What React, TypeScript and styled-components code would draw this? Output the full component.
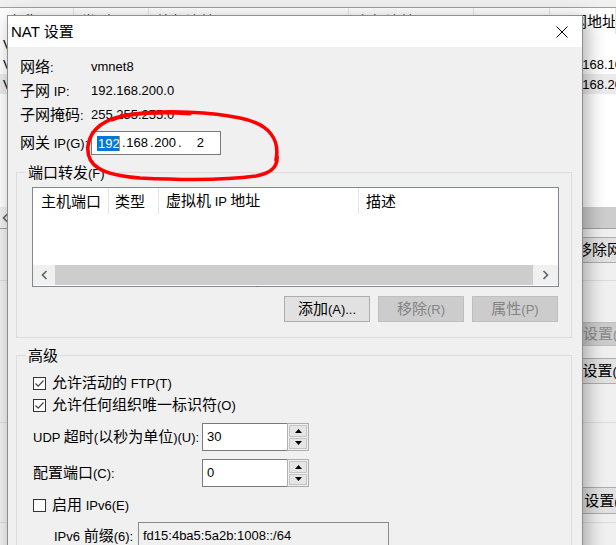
import React from 'react';
import styled, { createGlobalStyle } from 'styled-components';

const CJK_FONT = `"Noto Sans CJK SC", "Liberation Sans", sans-serif`;
const LATIN_FONT = `"Liberation Sans", "Noto Sans CJK SC", sans-serif`;

const GlobalStyle = createGlobalStyle`
  html, body { margin: 0; padding: 0; background: #f0f0f0; }
  body { font-family: ${CJK_FONT}; }
  * { box-sizing: border-box; }
`;

const Latin = styled.span<{ $size?: number }>`
  font-family: ${LATIN_FONT};
  font-size: ${(p) => p.$size ?? 13}px;
  white-space: pre;
`;

const CJK_RE = /([\u3000-\u303f\u4e00-\u9fff]+)/;

const Txt: React.FC<{ t: string; latin?: number }> = ({ t, latin }) => (
  <span>
    {t.split(CJK_RE).map((s, i) =>
      s === '' ? null : CJK_RE.test(s) ? (
        <React.Fragment key={i}>{s}</React.Fragment>
      ) : (
        <Latin key={i} $size={latin}>
          {s}
        </Latin>
      )
    )}
  </span>
);

/* ---------- page ---------- */

const Screen = styled.div`
  position: relative;
  width: 616px;
  height: 545px;
  overflow: hidden;
  background: #f0f0f0;
  font-family: ${CJK_FONT};
  font-size: 15px;
  line-height: 20px;
  color: #000;
`;

/* ---------- background window (virtual network editor) ---------- */

const BgWindow = styled.div`
  display: flex;
  flex-direction: column;
  height: 100%;
`;

const BgTopStrip = styled.div`
  flex: none;
  height: 7px;
`;

const BgList = styled.div`
  flex: none;
  height: 222px;
  border-top: 1px solid #a0a0a0;
  border-bottom: 1px solid #a0a0a0;
  background: #fff;
  display: flex;
  flex-direction: column;
`;

const bgCols = '74px 75px 200px 125px 76px 1fr';

const BgHeader = styled.div`
  display: grid;
  grid-template-columns: ${bgCols};
  height: 26px;
  flex: none;
`;

const BgHeadCell = styled.div<{ $pad?: number }>`
  border-right: 1px solid #e5e5e5;
  padding-left: ${(p) => p.$pad ?? 7}px;
  display: flex;
  align-items: center;
  white-space: nowrap;
  overflow: hidden;
`;

const BgRow = styled.div<{ $selected?: boolean }>`
  display: grid;
  grid-template-columns: ${bgCols};
  height: 20px;
  flex: none;
  background: ${(p) => (p.$selected ? '#ebebeb' : 'transparent')};
`;

const BgCell = styled.div<{ $pad?: number }>`
  padding-left: ${(p) => p.$pad ?? 7}px;
  display: flex;
  align-items: center;
  white-space: nowrap;
  overflow: hidden;
`;

const BgListFill = styled.div`
  flex: 1;
`;

const BgHScroll = styled.div`
  flex: none;
  height: 21px;
  display: flex;
  background: #f0f0f0;
`;

const BgScrollArrow = styled.div`
  width: 17px;
  display: flex;
  align-items: center;
  padding-left: 2px;
`;

const BgScrollThumb = styled.div`
  flex: 1;
  background: #cdcdcd;
`;

const BgButtonRow = styled.div`
  margin-top: 8px;
  display: flex;
`;

const BgButton = styled.div<{ $x: number; $h: number; $disabled?: boolean; $top: number }>`
  flex: none;
  margin-top: ${(p) => p.$top}px;
  margin-left: ${(p) => p.$x}px;
  width: 160px;
  height: ${(p) => p.$h}px;
  border: 1px solid ${(p) => (p.$disabled ? '#bfbfbf' : '#adadad')};
  background: ${(p) => (p.$disabled ? '#cccccc' : '#e1e1e1')};
  color: ${(p) => (p.$disabled ? '#8a8a8a' : '#000')};
  display: flex;
  align-items: center;
  padding-left: 10px;
  white-space: nowrap;
`;

const BgRule = styled.div<{ $top: number }>`
  flex: none;
  margin-top: ${(p) => p.$top}px;
  border-top: 1px solid #dcdcdc;
`;

/* ---------- dialog ---------- */

const Dialog = styled.div`
  position: absolute;
  left: 7px;
  top: 15px;
  width: 576px;
  height: 570px;
  border: 1px solid #8e8e8e;
  background: #f0f0f0;
  box-shadow: 4px 4px 18px rgba(0, 0, 0, 0.32);
  display: flex;
  flex-direction: column;
`;

const TitleBar = styled.div`
  flex: none;
  height: 31px;
  background: #fff;
  display: flex;
  align-items: center;
  justify-content: space-between;
  padding-left: 3px;
  font-family: ${LATIN_FONT};
  font-size: 15px;
`;

const CloseButton = styled.div`
  width: 41px;
  height: 31px;
  display: flex;
  align-items: center;
  justify-content: center;
`;

const Body = styled.div`
  flex: 1;
  padding: 8px 10px 0 8px;
  display: flex;
  flex-direction: column;
`;

const InfoGrid = styled.div`
  margin-left: 4px;
  display: grid;
  grid-template-columns: 71px 1fr;
  grid-template-rows: 24px 24px 24px 32px;
  align-items: center;
`;

const InfoLabel = styled.div`
  white-space: nowrap;
`;

const InfoValue = styled.div`
  font-family: ${LATIN_FONT};
  font-size: 13px;
`;

const IpBox = styled.div`
  width: 130px;
  height: 24px;
  border: 1px solid #7a7a7a;
  background: #fff;
  display: flex;
  align-items: center;
  padding-left: 5px;
  font-family: ${LATIN_FONT};
  font-size: 13px;
`;

const IpField = styled.div`
  width: 23px;
  display: flex;
  justify-content: flex-end;
  align-items: center;
`;

const IpDot = styled.div`
  width: 5px;
  padding-left: 2px;
`;

const Selected = styled.span`
  background: #0078d7;
  color: #fff;
  line-height: 15px;
  display: inline-block;
  padding-left: 1px;
`;

const Caret = styled.span`
  display: inline-block;
  width: 2px;
  height: 15px;
  background: #f08a24;
  margin-left: -1px;
`;

const Group = styled.div<{ $top: number }>`
  position: relative;
  margin-top: ${(p) => p.$top}px;
  border: 1px solid #dcdcdc;
`;

const GroupCaption = styled.span`
  position: absolute;
  top: -11px;
  left: 9px;
  padding: 0 2px;
  background: #f0f0f0;
  line-height: 20px;
  white-space: nowrap;
`;

const PortGroupInner = styled.div`
  padding: 14px 12px 15px 15px;
  display: flex;
  flex-direction: column;
`;

const ListView = styled.div`
  height: 100px;
  border: 1px solid #828790;
  background: #fff;
  display: flex;
  flex-direction: column;
`;

const LvHeader = styled.div`
  flex: none;
  height: 26px;
  display: grid;
  grid-template-columns: 76px 50px 200px 1fr;
`;

const LvHeadCell = styled.div<{ $pad: number; $last?: boolean }>`
  padding-left: ${(p) => p.$pad}px;
  border-right: ${(p) => (p.$last ? 'none' : '1px solid #e5e5e5')};
  display: flex;
  align-items: center;
  white-space: nowrap;
`;

const LvBody = styled.div`
  flex: 1;
`;

const LvScroll = styled.div`
  flex: none;
  height: 20px;
  margin-bottom: 1px;
  display: flex;
  background: #f0f0f0;
`;

const LvArrow = styled.div<{ $w: number }>`
  width: ${(p) => p.$w}px;
  display: flex;
  align-items: center;
  justify-content: center;
`;

const LvThumb = styled.div`
  flex: 1;
  background: #cdcdcd;
`;

const SplitterMark = styled.div`
  height: 0;
  display: flex;
  justify-content: center;
  padding-right: 76px;
  color: #555;
  font-size: 9px;
  line-height: 6px;
  font-family: ${LATIN_FONT};
`;

const ButtonRow = styled.div`
  margin-top: 9px;
  padding-right: 1px;
  display: flex;
  justify-content: flex-end;
  gap: 8px;
`;

const PushButton = styled.div<{ $disabled?: boolean }>`
  width: 86px;
  height: 26px;
  border: 1px solid ${(p) => (p.$disabled ? '#bfbfbf' : '#adadad')};
  background: ${(p) => (p.$disabled ? '#cccccc' : '#e1e1e1')};
  color: ${(p) => (p.$disabled ? '#838383' : '#000')};
  display: flex;
  align-items: center;
  justify-content: center;
  white-space: nowrap;
`;

const AdvInner = styled.div`
  padding: 16px 12px 40px 16px;
  display: flex;
  flex-direction: column;
`;

const CheckRow = styled.div<{ $top?: number }>`
  margin-top: ${(p) => p.$top ?? 0}px;
  height: 22px;
  display: flex;
  align-items: center;
  gap: 6px;
  white-space: nowrap;
`;

const CheckBox = styled.div`
  width: 13px;
  height: 13px;
  border: 1px solid #333;
  background: #fff;
  display: flex;
  align-items: center;
  justify-content: center;
`;

const FieldRow = styled.div<{ $top: number; $h: number }>`
  margin-top: ${(p) => p.$top}px;
  height: ${(p) => p.$h}px;
  display: flex;
  align-items: center;
`;

const FieldLabel = styled.div<{ $w: number; $indent?: number }>`
  width: ${(p) => p.$w}px;
  padding-left: ${(p) => p.$indent ?? 0}px;
  white-space: nowrap;
  flex: none;
`;

const SpinBox = styled.div`
  display: flex;
  height: 28px;
`;

const SpinInput = styled.div`
  width: 85px;
  height: 28px;
  border: 1px solid #7a7a7a;
  border-right: none;
  background: #fff;
  padding: 3px 0 0 4px;
  font-family: ${LATIN_FONT};
  font-size: 13px;
  line-height: 20px;
`;

const SpinButtons = styled.div`
  width: 22px;
  border: 1px solid #adadad;
  display: flex;
  flex-direction: column;
  background: #f0f0f0;
`;

const SpinBtn = styled.div<{ $first?: boolean }>`
  flex: 1;
  margin: 1px;
  margin-top: ${(p) => (p.$first ? 1 : 0)}px;
  background: #e5e5e5;
  border: 1px solid #c4c4c4;
  display: flex;
  align-items: center;
  justify-content: center;
`;

const PrefixInput = styled.div`
  width: 251px;
  height: 27px;
  border: 1px solid #8a8a8a;
  background: #f0f0f0;
  padding: 3px 0 0 4px;
  font-family: ${LATIN_FONT};
  font-size: 13px;
  line-height: 20px;
`;

const Annotation = styled.svg`
  position: absolute;
  left: 0;
  top: 0;
  width: 616px;
  height: 545px;
  pointer-events: none;
`;

/* ---------- small drawings ---------- */

const Chevron: React.FC<{ dir: 'l' | 'r' }> = ({ dir }) => (
  <svg width="7" height="10" viewBox="0 0 7 10">
    <path
      d={dir === 'l' ? 'M5.5 1 L1.5 5 L5.5 9' : 'M1.5 1 L5.5 5 L1.5 9'}
      fill="none"
      stroke="#606060"
      strokeWidth="1.6"
    />
  </svg>
);

const Tick = () => (
  <svg width="11" height="11" viewBox="0 0 11 11">
    <polyline points="1.5,5.5 4.2,8.2 9.5,2.5" fill="none" stroke="#444" strokeWidth="1.2" />
  </svg>
);

const Tri: React.FC<{ up?: boolean }> = ({ up }) => (
  <svg width="7" height="4" viewBox="0 0 7 4">
    <polygon points={up ? '0,4 7,4 3.5,0' : '0,0 7,0 3.5,4'} fill="#000" />
  </svg>
);

const Spin: React.FC<{ value: string }> = ({ value }) => (
  <SpinBox>
    <SpinInput>{value}</SpinInput>
    <SpinButtons>
      <SpinBtn $first>
        <Tri up />
      </SpinBtn>
      <SpinBtn>
        <Tri />
      </SpinBtn>
    </SpinButtons>
  </SpinBox>
);

/* ---------- app ---------- */

const bgRows = [
  ['VMnet0', '桥接模式', '自动桥接', '-', '-', '-'],
  ['VMnet1', '仅主机模式', '-', '已连接', '已启用', '192.168.10.0'],
  ['VMnet8', 'NAT 模式', 'NAT 模式', '已连接', '已启用', '192.168.200.0'],
];

export default function App() {
  return (
    <>
      <GlobalStyle />
      <Screen>
        <BgWindow>
          <BgTopStrip />
          <BgList>
            <BgHeader>
              {['名称', '类型', '外部连接', '主机连接', 'DHCP', '子网地址'].map((h, i) => (
                <BgHeadCell key={h} $pad={i === 0 ? 8 : 7}>
                  <Txt t={h} />
                </BgHeadCell>
              ))}
            </BgHeader>
            {bgRows.map((r, ri) => (
              <BgRow key={r[0]} $selected={ri === 2}>
                {r.map((c, ci) => (
                  <BgCell key={ci} $pad={ci === 0 ? 3 : 7}>
                    <Txt t={c} />
                  </BgCell>
                ))}
              </BgRow>
            ))}
            <BgListFill />
            <BgHScroll>
              <BgScrollArrow>
                <Chevron dir="l" />
              </BgScrollArrow>
              <BgScrollThumb />
            </BgHScroll>
          </BgList>
          <BgButtonRow>
            <BgButton $x={566} $h={26} $top={0}>
              <Txt t="移除网络(O)" />
            </BgButton>
          </BgButtonRow>
          <BgRule $top={17} />
          <BgButton $x={542} $h={24} $top={41} $disabled>
            <Txt t="自动设置(U)..." />
          </BgButton>
          <BgButton $x={543} $h={26} $top={12}>
            <Txt t="NAT 设置(S)..." />
          </BgButton>
          <BgRule $top={38} />
          <BgButton $x={533} $h={27} $top={64}>
            <Txt t="DHCP 设置(P)..." />
          </BgButton>
          <BgRule $top={8} />
        </BgWindow>

        <Dialog>
          <TitleBar>
            <span>NAT 设置</span>
            <CloseButton>
              <svg width="12" height="12" viewBox="0 0 12 12">
                <path d="M0.5 0.5 L11.5 11.5 M11.5 0.5 L0.5 11.5" stroke="#000" strokeWidth="1" />
              </svg>
            </CloseButton>
          </TitleBar>
          <Body>
            <InfoGrid>
              <InfoLabel>
                <Txt t="网络:" />
              </InfoLabel>
              <InfoValue>vmnet8</InfoValue>
              <InfoLabel>
                <Txt t="子网 IP:" />
              </InfoLabel>
              <InfoValue>192.168.200.0</InfoValue>
              <InfoLabel>
                <Txt t="子网掩码:" />
              </InfoLabel>
              <InfoValue>255.255.255.0</InfoValue>
              <InfoLabel>
                <Txt t="网关 IP(G):" />
              </InfoLabel>
              <IpBox>
                <IpField>
                  <Selected>192</Selected>
                  <Caret />
                </IpField>
                <IpDot>.</IpDot>
                <IpField>168</IpField>
                <IpDot>.</IpDot>
                <IpField>200</IpField>
                <IpDot>.</IpDot>
                <IpField>2</IpField>
              </IpBox>
            </InfoGrid>

            <Group $top={13}>
              <GroupCaption>
                <Txt t="端口转发(F)" />
              </GroupCaption>
              <PortGroupInner>
                <ListView>
                  <LvHeader>
                    <LvHeadCell $pad={8}>主机端口</LvHeadCell>
                    <LvHeadCell $pad={6}>类型</LvHeadCell>
                    <LvHeadCell $pad={7}>
                      <Txt t="虚拟机 IP 地址" />
                    </LvHeadCell>
                    <LvHeadCell $pad={7} $last>
                      描述
                    </LvHeadCell>
                  </LvHeader>
                  <LvBody />
                  <LvScroll>
                    <LvArrow $w={22}>
                      <Chevron dir="l" />
                    </LvArrow>
                    <LvThumb />
                    <LvArrow $w={25}>
                      <Chevron dir="r" />
                    </LvArrow>
                  </LvScroll>
                </ListView>
                <SplitterMark>˙</SplitterMark>
                <ButtonRow>
                  <PushButton>
                    <Txt t="添加(A)..." />
                  </PushButton>
                  <PushButton $disabled>
                    <Txt t="移除(R)" />
                  </PushButton>
                  <PushButton $disabled>
                    <Txt t="属性(P)" />
                  </PushButton>
                </ButtonRow>
              </PortGroupInner>
            </Group>

            <Group $top={17}>
              <GroupCaption>高级</GroupCaption>
              <AdvInner>
                <CheckRow>
                  <CheckBox>
                    <Tick />
                  </CheckBox>
                  <Txt t="允许活动的 FTP(T)" />
                </CheckRow>
                <CheckRow>
                  <CheckBox>
                    <Tick />
                  </CheckBox>
                  <Txt t="允许任何组织唯一标识符(O)" />
                </CheckRow>
                <FieldRow $top={7} $h={28}>
                  <FieldLabel $w={169}>
                    <Txt t="UDP 超时(以秒为单位)(U):" />
                  </FieldLabel>
                  <Spin value="30" />
                </FieldRow>
                <FieldRow $top={8} $h={28}>
                  <FieldLabel $w={169}>
                    <Txt t="配置端口(C):" />
                  </FieldLabel>
                  <Spin value="0" />
                </FieldRow>
                <CheckRow $top={7}>
                  <CheckBox />
                  <Txt t="启用 IPv6(E)" />
                </CheckRow>
                <FieldRow $top={6} $h={27}>
                  <FieldLabel $w={105} $indent={21}>
                    <Txt t="IPv6 前缀(6):" />
                  </FieldLabel>
                  <PrefixInput>fd15:4ba5:5a2b:1008::/64</PrefixInput>
                </FieldRow>
              </AdvInner>
            </Group>
          </Body>
        </Dialog>

        <Annotation viewBox="0 0 616 545">
          <path
            d="M 276 160 C 280 140, 270 124, 240 118 C 212 112, 168 110, 133 114 C 104 118, 90 129, 88 146 C 86 165, 100 175, 140 178 C 180 180, 228 180, 256 176 C 271 173, 278 167, 277 156"
            fill="none"
            stroke="#ff0000"
            strokeWidth="3.6"
            strokeLinecap="round"
          />
          <path
            d="M 112 120 C 130 113, 160 112, 190 114"
            fill="none"
            stroke="#ff0000"
            strokeWidth="3"
            strokeLinecap="round"
          />
        </Annotation>
      </Screen>
    </>
  );
}
